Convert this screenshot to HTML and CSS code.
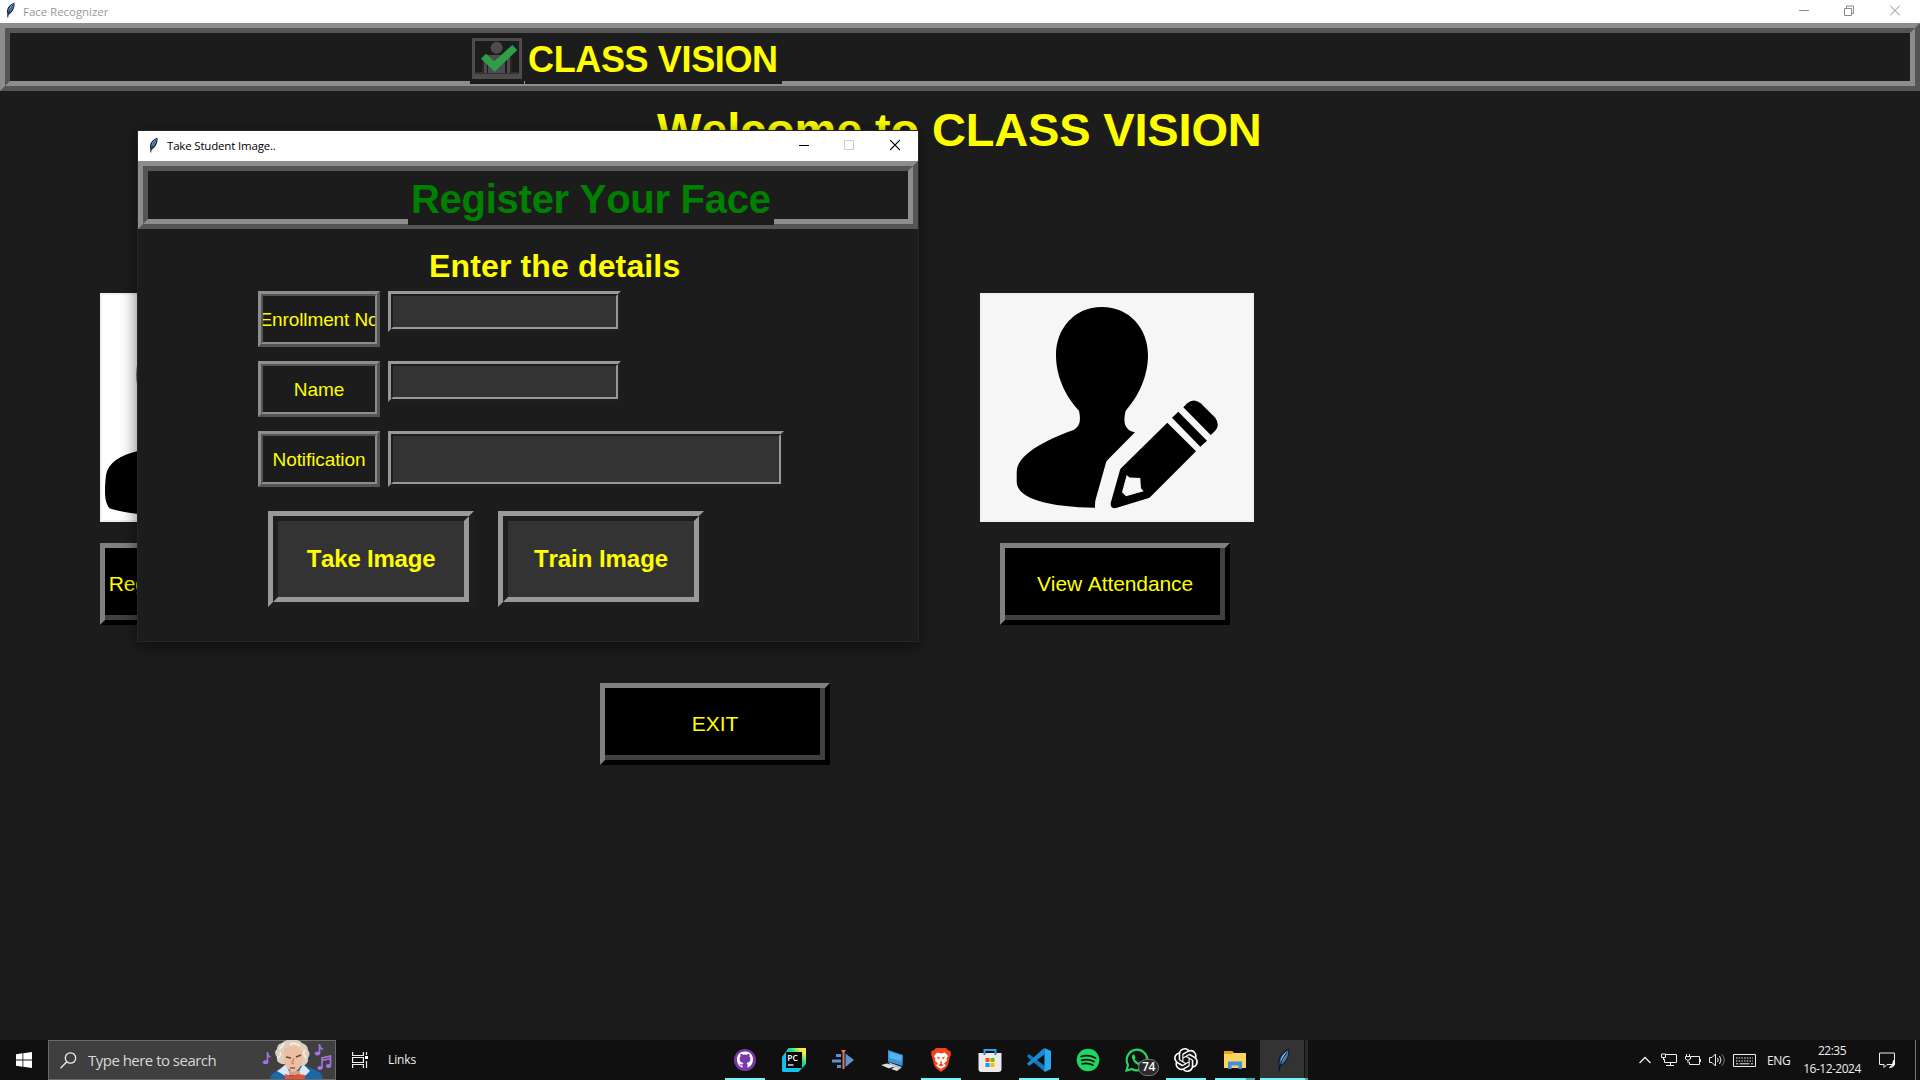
FILE: index.html
```html
<!DOCTYPE html>
<html lang="en">
<head>
<meta charset="utf-8">
<title>Face Recognizer</title>
<link rel="stylesheet" href="styles.css">
</head>
<body>
<svg width="0" height="0" class="defs">
  <symbol id="feather" viewBox="0 0 16 16">
    <path d="M4.6 15.5 4.2 11 C3.2 7 6 2.5 11.4 .4 C12 4 11 9 6 12.4 L5.4 12.6 Z" fill="#16202e"/>
    <path d="M5.2 11 C4.6 7.2 7 3.6 10.8 1.6 C10.9 5.4 9.2 8.8 5.8 11.4 Z" fill="#4a80c4"/>
    <path d="M6 8 C6.6 5.6 8.2 3.6 10 2.4 L6.6 9 Z" fill="#a9cdf2"/>
    <path d="M4.7 15.5 C5.2 11 7 6.4 10 3" fill="none" stroke="#0c1420" stroke-width=".7"/>
  </symbol>
</svg>

<div class="desktop">
  <section class="main-window">
    <header class="titlebar titlebar-main">
      <svg class="feather" width="16" height="16"><use href="#feather"/></svg>
      <span class="title-text">Face Recognizer</span>
      <div class="controls">
        <svg width="10" height="11" viewBox="0 0 10 11"><path d="M0 5.5H10" stroke="#8a8a8a"/></svg>
        <svg width="10" height="11" viewBox="0 0 10 11" fill="none" stroke="#8a8a8a"><path d="M.5 3.500h7v7h-7zM2.500 3.500v-2.500h7v7.500h-2"/></svg>
        <svg width="10" height="11" viewBox="0 0 10 11"><path d="M0 .5 10 10.500M10 .5 0 10.500" stroke="#8a8a8a"/></svg>
      </div>
    </header>

    <div class="ridge"><div class="ridge-inner brand">
      <div class="brand-logo">
        <svg width="50" height="41" viewBox="0 0 50 41">
          <path d="M1.500 1.500H48.500V38.500H1.500Z" fill="none" stroke="#4c4c4c" stroke-width="3"/>
          <path d="M0 35.500H50V41H0Z" fill="#4c4c4c"/>
          <circle cx="24.700" cy="9.700" r="6" fill="#4c4c4c"/>
          <path d="M12 35V19q0-2 2-2H36q2 0 2 2V35H35V22H33V35H16V22H15V35Z" fill="#4c4c4c"/>
          <path d="M4 34.500H11V20M39 20V34.500H46" fill="none" stroke="#333" stroke-width="1"/>
          <path d="M9 20.700 14 15.700 22.300 23.300 40.300 7 45.300 12 22.700 33.700Z" fill="#2e9e48"/>
        </svg>
      </div>
      <h1 class="brand-name">CLASS VISION</h1>
    </div></div>

    <main class="home">
      <h2 class="welcome">Welcome to CLASS VISION</h2>
      <div class="cards">
        <div class="card">
          <div class="picture picture-white">
            <svg width="270" height="225" viewBox="2 2 270 225">
              <path d="M80 150 38 158C20 162 8 170 6 182C4.500 196 4.500 205 7 211Q8 214 10 215.500C18 218 28 220 38 221H80Z"/>
              <ellipse cx="81" cy="82" rx="44.500" ry="62"/>
            </svg>
          </div>
          <button class="raised">Register a new student</button>
        </div>
        <div class="card card-view">
          <div class="picture">
            <svg width="270" height="225" viewBox="2 2 270 225">
              <path d="M121.700 14C150 14 168 36 168 62C168 84 158 104 145.700 117.700C144 124 144 130 146 133.500C148 137 150.500 138.500 155 139.300L129 165.500Q126.500 168 126 169.500L115.500 207Q115 209 115 214.700C70 214 36.700 206 36.700 188.700V179C37 162 63 148 93.500 137C99 134 101.500 129 99 117.700C86 104 76 84 76 62C76 36 94 14 121.700 14Z"/>
              <path d="M187.300 129.700 216 158.300 170.500 203.700Q169.500 204.700 168 205.200L136 215Q130 216 130.700 210L140 177Q140.400 175.700 141.500 174.700Z"/>
              <path d="M198.300 118.700 227 147.700 220.300 153.800 192 124.700Z"/>
              <path d="M203.300 114.300 207.300 110.300Q213.500 104.500 220.700 110.300L235 124.500Q240.500 132 235 138L230.700 142Z"/>
              <path d="M146.700 182 149.500 184.500 160.300 185 161 195.300 163.700 198.300 146 203.300 142 199.300Z" fill="#f6f6f6"/>
            </svg>
          </div>
          <button class="raised">View Attendance</button>
        </div>
      </div>
      <button class="raised exit">EXIT</button>
    </main>
  </section>

  <section class="dialog">
    <header class="titlebar titlebar-dialog">
      <svg class="feather" width="16" height="16"><use href="#feather"/></svg>
      <span class="title-text">Take Student Image..</span>
      <div class="controls">
        <svg width="10" height="11" viewBox="0 0 10 11"><path d="M0 5.500H10" stroke="#000"/></svg>
        <svg width="10" height="11" viewBox="0 0 10 11"><path d="M.5 .5h9v9h-9z" fill="none" stroke="#ccc"/></svg>
        <svg width="10" height="11" viewBox="0 0 10 11"><path d="M0 0 10 10M10 0 0 10" stroke="#000" stroke-width="1.200"/></svg>
      </div>
    </header>
    <div class="ridge"><div class="ridge-inner dialog-head">
      <h2 class="dialog-title">Register Your Face</h2>
    </div></div>
    <h3 class="subtitle">Enter the details</h3>
    <div class="form">
      <div class="row"><div class="label"><div class="label-inner">Enrollment No</div></div><div class="field"><div class="field-inner"></div></div></div>
      <div class="row"><div class="label"><div class="label-inner">Name</div></div><div class="field"><div class="field-inner"></div></div></div>
      <div class="row"><div class="label"><div class="label-inner">Notification</div></div><div class="field field-wide"><div class="field-inner"></div></div></div>
    </div>
    <div class="actions">
      <div class="action"><div class="action-inner take">Take Image</div></div>
      <div class="action"><div class="action-inner train">Train Image</div></div>
    </div>
  </section>

  <footer class="taskbar">
    <div class="start">
      <svg width="16" height="16" viewBox="0 0 16 16" fill="#fff"><path d="M0 2.200 6.500 1.300V7.600H0ZM7.300 1.200 16 0V7.600H7.300ZM0 8.400H6.500V14.700L0 13.800ZM7.300 8.400H16V16L7.300 14.800Z"/></svg>
    </div>
    <div class="search">
      <svg width="17" height="17" viewBox="0 0 17 17" fill="none" stroke="#eee" stroke-width="1.300"><circle cx="10.500" cy="6" r="5.200"/><path d="M6.800 9.700 .5 16.200"/></svg>
      <span>Type here to search</span>
      <svg class="composer" width="70" height="39" viewBox="0 0 70 39">
        <g fill="none" stroke="#a873e8" stroke-width="1.600"><path d="M5.500 22V12q0 4 3 5"/><path d="M57.500 13V4q0 4 3.500 5.500"/><path d="M60 28V18L68.500 16V26"/><path d="M60 20.500 68.500 18.500"/></g>
        <g fill="#a873e8"><ellipse cx="3.500" cy="22.300" rx="2.700" ry="2"/><ellipse cx="55.500" cy="13.500" rx="2.700" ry="2"/><ellipse cx="58" cy="28" rx="2.600" ry="2"/><ellipse cx="66.500" cy="26" rx="2.600" ry="2"/></g>
        <path d="M8 39Q9 32 18 30L27 24 42 25 51 29Q60 32 61 39Z" fill="#1c67a8"/>
        <path d="M18 29 24 24 28 34 25 37 15 31ZM41 24 48 31 41 38 36 33Z" fill="#dbe8f2"/>
        <path d="M27 31H38V35H27Z" fill="#d99f83"/>
        <path d="M23 34 30 36 36 34 43 35V39H23Z" fill="#e4513a"/>
        <path d="M15 17Q11 12 15 9Q15 4 20 3Q24-1 30 0Q37-1 40 3Q46 5 46 10Q49 14 46 18Q47 23 41 26L20 24Q14 23 15 17Z" fill="#ddcfbd"/>
        <path d="M22 11Q24 6 31 6Q38 7 40 12L41 20Q38 31 31 32Q26 31 22 22Z" fill="#edbfa2"/>
        <path d="M32 18 30 23 32 24" fill="none" stroke="#b97d62" stroke-width="1.200"/>
        <path d="M24 17 29 18M34 17 39 15" stroke="#614a40" stroke-width="1.500"/>
        <path d="M28 28H33" stroke="#b5443a" stroke-width="1.500"/>
        <path d="M17 9Q21 7 22 3M15 18Q20 16 18 12M28 5Q32 1 38 6M43 10Q40 13 44 18" fill="none" stroke="#fbf4e8" stroke-width="1.400"/>
      </svg>
    </div>
    <svg class="taskview" width="17" height="16" viewBox="0 0 17 16" fill="none" stroke="#eee" stroke-width="1.200"><path d="M.6 0V3.500H11.400V0M.6 5.500H11.400V10.500H.6ZM.6 16V12.500H11.400V16M14.500 0V3M14.500 9V16"/><path d="M13 4h3v3h-3z" fill="#fff" stroke="none"/></svg>
    <span class="links">Links</span>

    <div class="apps">
      <div class="app open"><svg width="24" height="24" viewBox="0 0 24 24"><circle cx="12" cy="12" r="11" fill="#7a37a8"/><path d="M12 3.500C7 3.500 4 7 4 11.500C4 15.500 6.500 18.500 9.500 19.800V17.500C7.500 18 6.800 16.500 6.200 15.700C7.500 15.500 8 17 9.700 16.300C9.900 15.700 10.200 15.300 10.500 15C8 14.700 6.600 13.500 6.600 11C6.600 10 7 9 7.600 8.300C7.300 7.400 7.400 6.500 7.700 5.700C8.700 5.700 9.500 6.300 10.100 6.800Q12 6.300 13.900 6.800C14.500 6.300 15.300 5.700 16.300 5.700C16.600 6.500 16.700 7.400 16.400 8.300C17 9 17.400 10 17.400 11C17.400 13.500 16 14.700 13.500 15C14.200 15.600 14.500 16.300 14.500 17.300V19.800C17.500 18.500 20 15.500 20 11.500C20 7 17 3.500 12 3.500Z" fill="#fff" fill-rule="evenodd"/></svg></div>
      <div class="app"><svg width="24" height="24" viewBox="0 0 24 24"><defs><linearGradient id="pc" x1="0" y1="1" x2="1" y2="0"><stop offset=".35" stop-color="#12bff0"/><stop offset=".65" stop-color="#21d789"/><stop offset=".85" stop-color="#f5ed45"/></linearGradient></defs><path d="M6.500 0H24V16L16.500 24H1L0 23V9Z" fill="url(#pc)"/><path d="M4 4H20V20H4Z" fill="#050505"/><path d="M6 17H11.500" stroke="#fff" stroke-width="1.300"/><text x="5.300" y="12.500" class="pc-text">PC</text></svg></div>
      <div class="app"><svg width="24" height="24" viewBox="0 0 24 24"><path d="M5 6H10V9H5ZM1 11.500H10V14.500H1ZM6 17H10V20H6ZM14.500 5.500 23 12 14.500 19Z" fill="#5e93cf"/><path d="M10 2H15L13.500 4.500V21H11.500V4.500Z" fill="#d9766a"/></svg></div>
      <div class="app"><svg width="24" height="24" viewBox="0 0 24 24"><path d="M8 2 23 7 22.500 18 8 13.500Z" fill="#3996da"/><path d="M9.500 4 21.500 8 21 13 9.500 10Z" fill="#57b4f0"/><path d="M8 14 22 19 20 21 12 19Z" fill="#b9c0c6"/><path d="M1 17 7 15.500 15 18 9 20.500ZM11 21 15 19 20 20.500 17 23Z" fill="#dce1e4"/></svg></div>
      <div class="app open"><svg width="24" height="24" viewBox="0 0 24 24"><path d="M7 0H17L19.500 2.500 21.500 3 22 6.500 21 8.500 19 17Q18 20 12 24Q6 20 5 17L3 8.500 2 6.500 2.500 3 4.500 2.500Z" fill="#f5421b"/><path d="M8 4.500 12 5.500 16 4.500 19 8 17.500 10.500 18 12.500 15 15.500 17 17.500 12 21 7 17.500 9 15.500 6 12.500 6.500 10.500 5 8Z" fill="#fff"/><path d="M7.500 8.500 11 9.500 10 11.500ZM16.500 8.500 13 9.500 14 11.500ZM12 12 13 15 12 16.500 11 15ZM9 17 12 15.800 15 17 12 18.500Z" fill="#f5421b"/></svg></div>
      <div class="app"><svg width="24" height="24" viewBox="0 0 24 24"><path d="M6.500 7V2H17.500V7" fill="none" stroke="#2da2e8" stroke-width="2"/><path d="M.5 5H23.500V21Q23.500 24 20.500 24H3.500Q.5 24 .5 21Z" fill="#eceaea"/><path d="M6.500 4.500V7M17.500 4.500V7" stroke="#2286c9" stroke-width="2"/><path d="M7.500 10H11.500V14H7.500Z" fill="#f25022"/><path d="M12.500 10H16.500V14H12.500Z" fill="#7fba00"/><path d="M7.500 15H11.500V19H7.500Z" fill="#00a4ef"/><path d="M12.500 15H16.500V19H12.500Z" fill="#ffb900"/></svg></div>
      <div class="app open"><svg width="24" height="24" viewBox="0 0 24 24"><path d="M0 8 2 6 18 18V24L1.500 10Z" fill="#1177bb"/><path d="M0 15.500 17 0 18 6 2 18Z" fill="#1989d2"/><path d="M17.500 0 24 3V21L17.500 24Z" fill="#29a8f2"/></svg></div>
      <div class="app"><svg width="24" height="24" viewBox="0 0 24 24"><circle cx="12" cy="12" r="11.300" fill="#1ed760"/><path d="M5 8.500Q12.500 6.200 19.500 10M5.700 12.300Q12 10.500 18 13.500M6.300 15.800Q12 14.500 16.800 17" fill="none" stroke="#121212" stroke-width="1.800" stroke-linecap="round"/></svg></div>
      <div class="app"><svg width="24" height="24" viewBox="0 0 24 24"><path d="M1.500 22.500 3 17A10.300 10.300 0 1 1 7 21Z" fill="none" stroke="#25d366" stroke-width="2.200"/><path d="M8.300 6.500Q7 7 6.800 9Q7.500 14 13 17Q16 18.300 17.500 16.500L17.800 14.800 15 13.300 13.800 14.800Q11 13.700 9.500 11L10.500 9.700 9.500 6.800Z" fill="#25d366"/></svg><span class="badge">74</span></div>
      <div class="app open"><svg width="24" height="24" viewBox="0 0 24 24" fill="#fff"><path d="M22.2819 9.8211a5.9847 5.9847 0 0 0-.5157-4.9108 6.0462 6.0462 0 0 0-6.5098-2.9A6.0651 6.0651 0 0 0 4.9807 4.1818a5.9847 5.9847 0 0 0-3.9977 2.9 6.0462 6.0462 0 0 0 .7427 7.0966 5.98 5.98 0 0 0 .511 4.9107 6.051 6.051 0 0 0 6.5146 2.9001A5.9847 5.9847 0 0 0 13.2599 24a6.0557 6.0557 0 0 0 5.7718-4.2058 5.9894 5.9894 0 0 0 3.9977-2.9001 6.0557 6.0557 0 0 0-.7475-7.0729zm-9.022 12.6081a4.4755 4.4755 0 0 1-2.8764-1.0408l.1419-.0804 4.7783-2.7582a.7948.7948 0 0 0 .3927-.6813v-6.7369l2.02 1.1686a.071.071 0 0 1 .038.052v5.5826a4.504 4.504 0 0 1-4.4945 4.4944zm-9.6607-4.1254a4.4708 4.4708 0 0 1-.5346-3.0137l.142.0852 4.783 2.7582a.7712.7712 0 0 0 .7806 0l5.8428-3.3685v2.3324a.0804.0804 0 0 1-.0332.0615L9.74 19.9502a4.4992 4.4992 0 0 1-6.1408-1.6464zM2.3408 7.8956a4.485 4.485 0 0 1 2.3655-1.9728V11.6a.7664.7664 0 0 0 .3879.6765l5.8144 3.3543-2.0201 1.1685a.0757.0757 0 0 1-.071 0l-4.8303-2.7865A4.504 4.504 0 0 1 2.3408 7.872zm16.5963 3.8558L13.1038 8.364 15.1192 7.2a.0757.0757 0 0 1 .071 0l4.8303 2.7913a4.4944 4.4944 0 0 1-.6765 8.1042v-5.6772a.79.79 0 0 0-.407-.667zm2.0107-3.0231l-.142-.0852-4.7735-2.7818a.7759.7759 0 0 0-.7854 0L9.409 9.2297V6.8974a.0662.0662 0 0 1 .0284-.0615l4.8303-2.7866a4.4992 4.4992 0 0 1 6.6802 4.66zM8.3065 12.863l-2.02-1.1638a.0804.0804 0 0 1-.038-.0567V6.0742a4.4992 4.4992 0 0 1 7.3757-3.4537l-.142.0805L8.704 5.459a.7948.7948 0 0 0-.3927.6813zm1.0976-2.3654l2.602-1.4998 2.6069 1.4998v2.9994l-2.5974 1.4997-2.6067-1.4997Z"/></svg></div>
      <div class="app open stacked"><svg width="24" height="24" viewBox="0 0 24 24"><path d="M1 3H9L11 5H1Z" fill="#e39c0c"/><path d="M1 5H23V20H1Z" fill="#fcd462"/><path d="M1 3H9L10.500 4.500 9 6H1Z" fill="#e8a317"/><path d="M5 21V13.500H19V21H15.500V17.500H8.500V21Z" fill="#3d94dc"/></svg></div>
      <div class="app active"><svg width="24" height="24" viewBox="0 0 16 16"><use href="#feather"/></svg></div>
    </div>

    <div class="tray">
      <svg width="12" height="8" viewBox="0 0 12 8" fill="none" stroke="#eee" stroke-width="1.300"><path d="M.5 7 6 1.500 11.500 7"/></svg>
      <svg class="net" width="16" height="14" viewBox="0 0 16 14" fill="none" stroke="#eee"><path d="M5 1.500H15.500V9.500H3.500V6M9.500 9.500V12.500M5 12.500H13M.5 1V4.500H4.500V1ZM2.500 4.500V7"/></svg>
      <svg class="bat" width="16" height="14" viewBox="0 0 16 14" fill="none" stroke="#eee"><path d="M6 3.500H14.500V11.500H4.500V9M15.500 6V9M1.500 1V3M4.500 1V3M.5 3.500H5.500V6L3 7.500 .5 6ZM3 7.500V10"/></svg>
      <svg class="vol" width="17" height="14" viewBox="0 0 17 14" fill="none" stroke="#eee"><path d="M.5 4.500H3L6.500 1V13L3 9.500H.5ZM8.500 5Q10 7 8.500 9M10.500 3Q13.500 7 10.500 11"/><path d="M13 1.500Q17.500 7 13 12.500" stroke="#777"/></svg>
      <svg class="kbd" width="23" height="13" viewBox="0 0 23 13" fill="none" stroke="#eee"><path d="M.5 .5H22.500V12.500H.5Z"/><path d="M3 4H20M3 7H20" stroke-dasharray="1.500 1.200"/><path d="M3 9.800H5M6.500 9.800H16.500M18 9.800H20"/></svg>
      <span class="lang">ENG</span>
      <div class="clock"><span>22:35</span><span class="date">16-12-2024</span></div>
      <svg class="notes" width="17" height="17" viewBox="0 0 17 17"><path d="M.5 1H15.500V12.500H8L5 15.500V12.500H.5Z" fill="none" stroke="#eee"/><path d="M14.500 8.500Q17.500 15 10.500 15.500Q14.500 14 14.500 8.500Z" fill="#fff" stroke="#fff"/></svg>
      <div class="peek"></div>
    </div>
  </footer>
</div>
</body>
</html>
```
FILE: styles.css
```css
* { box-sizing: border-box; margin: 0; }
body { background: #1c1c1c; font-family: "Liberation Sans", Arial, sans-serif; font-kerning: none; color: #ff0; }
svg { display: block; flex: none; }
.defs { position: absolute; }
button { font: inherit; color: inherit; padding: 0; border-radius: 0; }
.desktop { width: 1920px; height: 1080px; display: flex; flex-direction: column; overflow: hidden; position: relative; }
.main-window { flex: 1; display: flex; flex-direction: column; min-height: 0; }

/* title bars */
.titlebar { background: #fff; display: flex; align-items: center; flex: none; font-family: "Open Sans", "Noto Sans", sans-serif; font-size: 11.5px; letter-spacing: -.04px; white-space: nowrap; }
.titlebar-main { height: 23px; color: #999; padding: 0 20px 3px 3px; }
.titlebar-dialog { height: 30px; color: #000; padding: 0 18px 2px 8px; }
.titlebar .title-text { margin-left: 4px; padding-top: 2px; }
.titlebar-dialog .title-text { margin-left: 5px; padding-top: 1px; letter-spacing: -.18px; }
.controls { display: flex; gap: 35px; margin-left: auto; }
.controls svg:last-child { margin-left: 1px; }

/* grooved frame */
.ridge { height: 68px; flex: none; border: 5px solid; border-color: #8d8d8d #555 #555 #8d8d8d; }
.ridge-inner { height: 58px; border: 5px solid; border-color: #555 #8d8d8d #8d8d8d #555; display: flex; align-items: flex-start; }
.brand { padding-left: 460px; gap: 1px; }
.brand-logo { width: 54px; height: 51px; padding: 5px 2px; background: #1c1c1c; flex: none; }
.brand-name { width: 257px; height: 51px; background: #1c1c1c; font-size: 36px; line-height: 54px; letter-spacing: -.36px; padding-left: 3px; white-space: nowrap; }

/* home */
.home { flex: 1; display: flex; flex-direction: column; align-items: flex-start; padding-top: 12px; }
.welcome { font-size: 47px; line-height: 54px; letter-spacing: -.17px; padding-left: 657px; white-space: nowrap; }
.cards { display: flex; gap: 606px; padding: 136px 0 0 100px; }
.card { width: 274px; display: flex; flex-direction: column; gap: 21px; }
.card-view { align-items: center; }
.card-view .raised { margin-right: 4px; }
.picture { width: 274px; height: 229px; border: 2px solid #f0f0f0; background: #f6f6f6; }
.picture-white { background: #fff; }
.raised { width: 230px; height: 82px; border: 5px solid; border-color: #808080 #000 #000 #808080; background: #000; box-shadow: inset -5px -5px #404040; font-size: 21px; letter-spacing: -.1px; white-space: nowrap; }
.exit { margin: 58px 0 0 600px; }

/* dialog window */
.dialog { position: absolute; left: 137px; top: 130px; width: 782px; height: 512px; border: 1px solid #262626; background: #1c1c1c; box-shadow: 0 4px 16px rgba(0, 0, 0, .55); display: flex; flex-direction: column; }
.dialog-head { padding-left: 260px; }
.dialog-title { width: 366px; height: 54px; background: #1c1c1c; color: #008000; font-size: 40px; line-height: 57px; letter-spacing: -.27px; padding-left: 3px; white-space: nowrap; }
.subtitle { font-size: 32px; line-height: 36px; letter-spacing: .14px; margin: 19px 0 0 291px; }
.form { display: flex; flex-direction: column; gap: 14px; margin: 7px 0 0 120px; }
.row { display: flex; align-items: flex-start; gap: 8px; height: 56px; }
.label { width: 122px; height: 56px; border: 3px solid; border-color: #8d8d8d #555 #555 #8d8d8d; }
.label-inner { height: 50px; border: 2px solid; border-color: #555 #8d8d8d #8d8d8d #555; font-size: 19px; letter-spacing: -.1px; display: flex; align-items: center; justify-content: center; overflow: hidden; white-space: nowrap; padding-top: 1px; }
.field { width: 233px; height: 41px; border: 3px solid; border-color: #999 #1e1e1e #1e1e1e #999; }
.field-inner { height: 100%; border: 2px solid; border-color: #1e1e1e #999 #999 #1e1e1e; background: #333; }
.field-wide { width: 396px; height: 56px; }
.actions { display: flex; gap: 24px; margin: 24px 0 0 130px; }
.action { width: 206px; height: 96px; border: 5px solid; border-color: #999 #1e1e1e #1e1e1e #999; }
.action-inner { height: 86px; border: 5px solid; border-color: #1e1e1e #999 #999 #1e1e1e; background: #333; font-size: 24px; font-weight: bold; display: flex; align-items: center; justify-content: center; }
.take { letter-spacing: -.2px; }
.train { letter-spacing: -.05px; }

/* taskbar */
.taskbar { height: 40px; flex: none; background: #101010; display: flex; align-items: center; color: #eee; font-family: "Open Sans", "Noto Sans", sans-serif; position: relative; }
.start { width: 48px; display: flex; justify-content: center; }
.search { width: 288px; height: 40px; background: #3f3f3f; border: 1px solid #6b6b6b; display: flex; align-items: center; padding-left: 11px; font-size: 15px; letter-spacing: -.52px; color: #d8d8d8; white-space: nowrap; }
.search span { margin-left: 11px; width: 136px; }
.composer { margin: -1px 0 0 38px; }
.taskview { margin-left: 16px; }
.links { font-size: 12px; margin-left: 35px; margin-top: -1px; width: 332px; letter-spacing: -.1px; }
.taskview + .links { margin-left: 35px; }
.apps { display: flex; height: 40px; }
.app { width: 49px; height: 40px; display: flex; align-items: center; justify-content: center; position: relative; }
.open { background: linear-gradient(#76f3f5, #76f3f5) 5px 38px / 40px 2px no-repeat; }
.stacked { background: linear-gradient(90deg, #76f3f5 31px, #4ea5a7 31px) 5px 38px / 40px 2px no-repeat; }
.active { background: linear-gradient(90deg, #76f3f5 45px, #4ea5a7 45px) 1px 38px / 48px 2px no-repeat, linear-gradient(90deg, #333 44px, #101010 44px, #101010 45px, #292929 45px) 1px 0 / 48px 40px no-repeat; }
.pc-text { font: 600 8.500px "Open Sans", sans-serif; fill: #fff; }
.badge { position: absolute; left: 26px; top: 19px; width: 21px; height: 17px; border: 1px solid #777; border-radius: 9px; background: #2b2b2b; color: #fff; font-size: 12px; font-weight: 600; line-height: 14px; text-align: center; letter-spacing: -.3px; }
.links { margin-right: -16px; }
.taskview { margin-right: -16px; }
.links { width: 348px; }
.tray { margin-left: auto; display: flex; align-items: center; height: 40px; font-size: 12px; white-space: nowrap; }
.net { margin-left: 10px; }
.bat, .vol { margin-left: 8px; }
.kbd { margin-left: 7px; }
.lang { margin-left: 11px; width: 24px; letter-spacing: -.4px; }
.clock { width: 62px; margin-left: 10px; display: flex; flex-direction: column; align-items: center; line-height: 18px; letter-spacing: -.5px; }
.notes { margin-left: 16px; }
.peek { width: 5px; height: 40px; border-left: 1px solid #777; margin-left: 19px; }
```
